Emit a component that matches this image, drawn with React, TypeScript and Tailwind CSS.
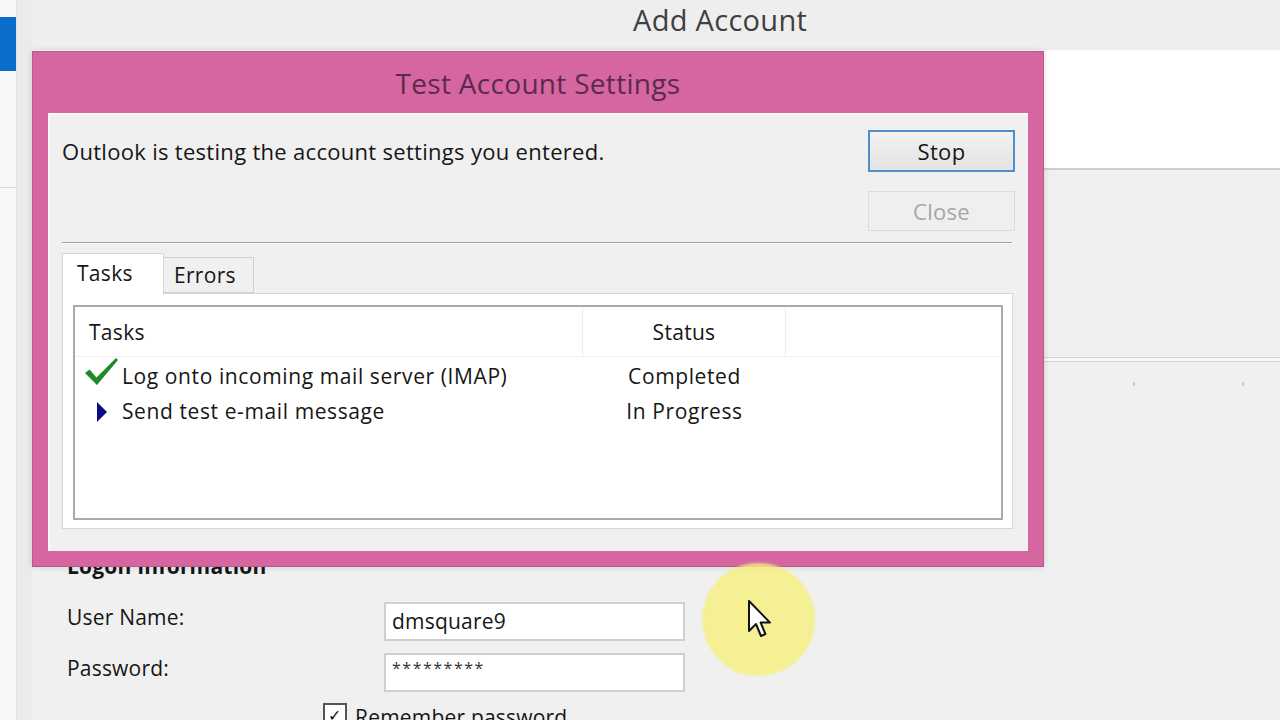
import React from 'react';

// Green tick used for a finished task
const DoneIcon = () => (
  <svg width="36" height="30" viewBox="0 0 36 30" className="shrink-0">
    <path d="M1 16 L5.5 12.5 L12.5 20.5 L32 1 L34 3 L13 28 Z" fill="#1f8a2a" />
  </svg>
);

// Small navy marker for the running task
const RunningIcon = () => (
  <svg width="12" height="20" viewBox="0 0 12 20" className="shrink-0">
    <polygon points="1,0 11,10 1,20" fill="#0c0c8a" />
  </svg>
);

const Cursor = () => (
  <svg width="26" height="40" viewBox="0 0 13 20">
    <path
      d="M1 1 L1 16 L4.5 12.5 L7 18.5 L9.2 17.5 L6.8 11.8 L11.5 11.8 Z"
      fill="#ffffff"
      stroke="#111111"
      strokeWidth="1"
      strokeLinejoin="round"
    />
  </svg>
);

type Task = { name: string; status: string; done: boolean };

const tasks: Task[] = [
  { name: 'Log onto incoming mail server (IMAP)', status: 'Completed', done: true },
  { name: 'Send test e-mail message', status: 'In Progress', done: false },
];

const TestAccountDialog: React.FC = () => (
  <div className="absolute left-[32px] top-[51px] w-[1012px] h-[516px] bg-[#d5669f] border border-[#b8598c] flex flex-col shadow-[0_0_6px_rgba(0,0,0,0.15)]">
    <div className="h-[61px] shrink-0 flex items-center justify-center">
      <span className="text-[28px] text-[#5c2a4e] tracking-[0.3px]">Test Account Settings</span>
    </div>

    <div className="flex-1 mx-[15px] mb-[15px] bg-[#f0f0f0] border-t-2 border-l-2 border-[#fbf7fa] flex flex-col text-[#161616] tracking-[0.3px]">
      <div className="flex justify-between pl-[12px] pr-[13px] pt-[15px]">
        <p className="text-[22px] pt-[5px]">Outlook is testing the account settings you entered.</p>
        <div className="flex flex-col gap-[19px]">
          <button className="w-[147px] h-[42px] border-2 border-[#4f8fc9] bg-gradient-to-b from-[#f2f2f2] to-[#e3e3e3] text-[22px] text-[#161616] font-medium">
            Stop
          </button>
          <button className="w-[147px] h-[40px] border border-[#dcdcdc] bg-[#efefef] text-[22px] text-[#a6a6a6]">
            Close
          </button>
        </div>
      </div>

      <div className="mt-[11px] ml-[12px] mr-[16px] h-[2px] border-t border-[#a3a3a3] border-b border-b-white" />

      <div className="ml-[12px] mr-[15px] mt-[9px] flex items-end">
        <div className="relative z-10 -mb-[2px] w-[102px] h-[42px] bg-white border border-b-0 border-[#d6d6d6] pl-[14px] pt-[4px] text-[21px]">
          Tasks
        </div>
        <div className="w-[90px] h-[36px] bg-[#f0f0f0] border border-l-0 border-[#cfcfcf] pl-[10px] pt-[2px] text-[21px]">
          Errors
        </div>
      </div>

      <div className="ml-[12px] mr-[15px] h-[236px] bg-white border border-[#d6d6d6] pt-[11px] pl-[10px] pr-[9px] pb-[8px]">
        <div className="h-full border-2 border-[#a9a9a9] bg-white flex flex-col">
          <div className="h-[50px] shrink-0 flex border-b border-[#efefef] mr-[2px]">
            <div className="w-[508px] border-r border-[#ececec] pl-[14px] pt-[2px] flex items-center text-[21px]">
              Tasks
            </div>
            <div className="w-[203px] border-r border-[#ececec] pt-[2px] flex items-center justify-center text-[21px]">
              Status
            </div>
          </div>
          {tasks.map((task) => (
            <div key={task.name} className="h-[35px] pt-[4px] flex items-center tracking-[0.6px]">
              <div className="w-[508px] flex items-center pl-[9px] h-full">
                <div className="w-[38px] h-full flex items-center justify-start">
                  {task.done ? (
                    <div className="-mt-[10px]">
                      <DoneIcon />
                    </div>
                  ) : (
                    <div className="pl-[12px]">
                      <RunningIcon />
                    </div>
                  )}
                </div>
                <span className="text-[21px]">{task.name}</span>
              </div>
              <div className="w-[203px] text-center text-[21px]">{task.status}</div>
            </div>
          ))}
        </div>
      </div>
    </div>
  </div>
);

const App: React.FC = () => {
  return (
    <div className="relative w-[1280px] h-[720px] overflow-hidden bg-[#f0f0f0] flex font-['Open_Sans','Noto_Sans',sans-serif]">
      {/* edge of the window behind */}
      <div className="w-[16px] shrink-0 bg-[#f8f8f8] flex flex-col">
        <div className="h-[17px]" />
        <div className="h-[54px] bg-[#0b6dca]" />
        <div className="h-[117px] border-b border-[#dadada]" />
      </div>
      <div className="w-[16px] shrink-0 bg-[#ebebeb] border-l border-[#e2e2e2]" />

      {/* Add Account wizard */}
      <div className="flex-1 flex flex-col">
        <div className="h-[50px] shrink-0 bg-[#eeeeee] pl-[601px]">
          <h1 className="text-[29px] text-[#3f3f3f] leading-[40px] tracking-[0.3px]">Add Account</h1>
        </div>
        <div className="h-[120px] shrink-0 bg-white border-b-2 border-[#cdcdcd]" />
        <div className="h-[187px] shrink-0" />
        <div className="h-[5px] shrink-0 border-t border-b border-[#d4d4d4] bg-[#f7f7f7]" />
        <div className="h-[24px] shrink-0 relative">
          <span className="absolute left-[1101px] top-[20px] w-[2px] h-[4px] bg-[#c8c8c8]" />
          <span className="absolute left-[1210px] top-[20px] w-[2px] h-[4px] bg-[#c8c8c8]" />
        </div>

        <div className="pl-[35px] pt-[166px] text-[#161616] tracking-[0.2px]">
          <h2 className="text-[21px] font-bold leading-[28px]">Logon Information</h2>
          <div className="mt-[22px] grid grid-cols-[317px_301px] gap-y-[12px]">
            <label className="text-[21px] leading-[30px]">User Name:</label>
            <div className="h-[39px] bg-white border-2 border-[#cfcfcf] pl-[6px] flex items-center text-[21px]">
              dmsquare9
            </div>
            <label className="text-[21px] leading-[30px]">Password:</label>
            <div className="h-[39px] bg-white border-2 border-[#cfcfcf] pl-[6px] pb-[10px] flex items-center text-[16px] tracking-[1.5px] text-[#333333]">
              *********
            </div>
          </div>
          <div className="mt-[11px] ml-[256px] flex items-start gap-[8px]">
            <div className="w-[24px] h-[24px] border-2 border-[#555555] bg-white flex items-center justify-center text-[16px] leading-none text-[#111111]">
              ✓
            </div>
            <span className="text-[21px] leading-[28px]">Remember password</span>
          </div>
        </div>
      </div>

      <TestAccountDialog />

      {/* pointer highlight */}
      <div className="absolute left-[702px] top-[563px] w-[113px] h-[113px] rounded-full bg-[#f5f07c] opacity-80 blur-[1px]" />
      <div className="absolute left-[747px] top-[599px]">
        <Cursor />
      </div>
    </div>
  );
};

export default App;
